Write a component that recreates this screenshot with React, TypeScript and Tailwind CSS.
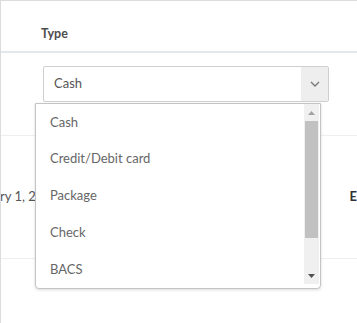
import React from "react";

const items = ["Cash", "Credit/Debit card", "Package", "Check", "BACS"];

export default function App() {
  return (
    <div
      className="relative w-[357px] h-[323px] overflow-hidden bg-white border-t border-l border-[#dcdcdc]"
      style={{ fontFamily: "Lato, 'Open Sans', sans-serif" }}
    >
      {/* header row */}
      <div className="h-[52px] border-b-2 border-[#e3e7eb] flex items-end pb-[11px] pl-[40px]">
        <span className="text-[12.5px] font-bold text-[#4d4d4d] leading-none">Type</span>
      </div>
      {/* row 1 */}
      <div className="h-[83px] border-b border-[#eceff2] pt-[13px] pl-[42px]">
        <div className="w-[286px] h-[36px] border border-[#cfcfcf] rounded-[2px] flex items-stretch bg-white">
          <div className="flex-1 flex items-center pl-[10px] text-[13px] text-[#555]">Cash</div>
          <div className="w-[27px] bg-[#eeeeee] flex items-center justify-center">
            <svg width="10" height="6" viewBox="0 0 10 6">
              <path d="M1 1 L5 5 L9 1" fill="none" stroke="#777" strokeWidth="1.3" />
            </svg>
          </div>
        </div>
      </div>
      {/* row 2 */}
      <div className="h-[123px] border-b border-[#eceff2] flex items-center justify-between text-[13px] text-[#555]">
        <span className="-ml-[1px]">ry 1, 2</span>
        <span className="font-bold text-[#333] pr-[0px]">E</span>
      </div>

      {/* dropdown list */}
      <div className="absolute left-[34px] top-[102px] w-[286px] h-[186px] bg-white border border-[#c4c4c4] rounded-b-[4px] shadow-[0_1px_3px_rgba(0,0,0,0.15)] flex">
        <div className="flex-1 flex flex-col">
          {items.map((it) => (
            <div key={it} className="h-[37px] flex items-center pl-[14px] text-[13px] text-[#666]">
              {it}
            </div>
          ))}
        </div>
        <div className="w-[15px] mr-[1px] mb-[4px] bg-[#f0f0f0] flex flex-col">
          <div className="h-[17px] flex items-center justify-center">
            <svg width="7" height="4" viewBox="0 0 7 4">
              <path d="M0 4 L3.5 0 L7 4 Z" fill="#a3a3a3" />
            </svg>
          </div>
          <div className="h-[117px] mx-[1px] bg-[#c1c1c1]" />
          <div className="flex-1" />
          <div className="h-[17px] flex items-center justify-center">
            <svg width="7" height="4" viewBox="0 0 7 4">
              <path d="M0 0 L7 0 L3.5 4 Z" fill="#505050" />
            </svg>
          </div>
        </div>
      </div>
    </div>
  );
}
